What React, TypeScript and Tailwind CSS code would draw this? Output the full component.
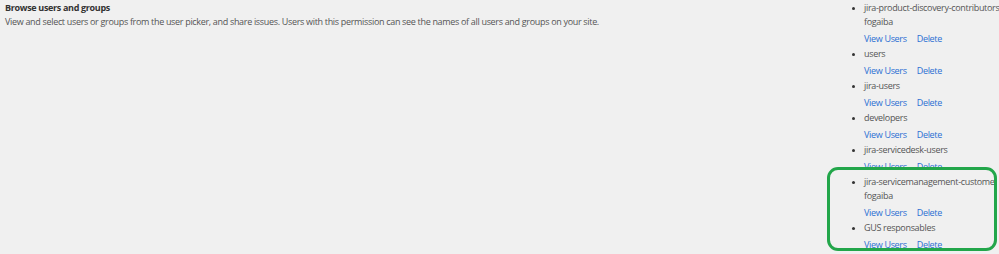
import React from "react";

type Group = { name: string; owner?: string };

const groupsTop: Group[] = [
  { name: "jira-product-discovery-contributors", owner: "fogaiba" },
  { name: "users" },
  { name: "jira-users" },
  { name: "developers" },
  { name: "jira-servicedesk-users" },
];

const groupsBoxed: Group[] = [
  { name: "jira-servicemanagement-customers", owner: "fogaiba" },
  { name: "GUS responsables" },
];

function Item({ g }: { g: Group }) {
  return (
    <li className="flex flex-col">
      <div className="flex items-start">
        <span className="w-[12px] shrink-0 flex justify-start pt-[6px]">
          <span className="block w-[3px] h-[3px] rounded-full bg-[#333]" />
        </span>
        <div className="flex flex-col whitespace-nowrap">
          <span className="leading-[14px]">{g.name}</span>
          {g.owner && <span className="leading-[14px]">{g.owner}</span>}
        </div>
      </div>
      <div className="pl-[12px] mt-[3px] mb-[1px] flex gap-[10px] leading-[14px] text-[#2a6fd3] whitespace-nowrap">
        <span>View Users</span>
        <span>Delete</span>
      </div>
    </li>
  );
}

export default function App() {
  return (
    <div
      className="w-[999px] h-[254px] overflow-hidden bg-[#f0f0f0] flex text-[9px] tracking-[-0.32px] text-[#555]"
      style={{ fontFamily: '"Open Sans", "Noto Sans", sans-serif' }}
    >
      <div className="flex-1 pl-[5px] pt-[1px]">
        <div className="font-bold text-[#333] leading-[14px]">Browse users and groups</div>
        <div className="leading-[14px]">
          View and select users or groups from the user picker, and share issues. Users with this permission can see the names of all users and groups on your site.
        </div>
      </div>
      <div className="w-[147px] shrink-0 pt-[1px]">
        <ul className="flex flex-col">
          {groupsTop.map((g) => (
            <Item key={g.name} g={g} />
          ))}
        </ul>
        <div className="relative -ml-[25px] -mt-[8px] pt-[5px] pl-[22px] w-[170px] h-[84px] border-[3px] border-[#22a64a] rounded-[11px] bg-[#f0f0f0] overflow-hidden">
          <ul className="flex flex-col">
            {groupsBoxed.map((g) => (
              <Item key={g.name} g={g} />
            ))}
          </ul>
        </div>
      </div>
    </div>
  );
}
